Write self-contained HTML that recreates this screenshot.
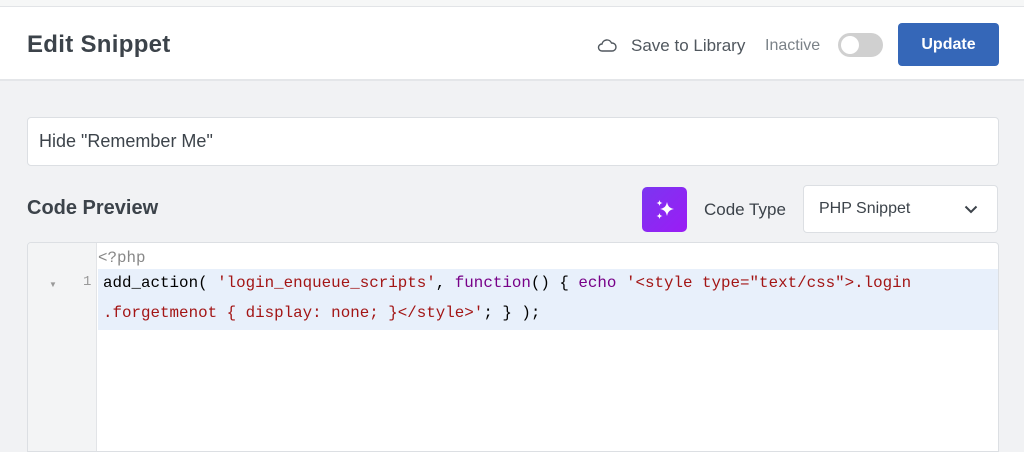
<!DOCTYPE html>
<html><head><meta charset="utf-8"><style>
*{box-sizing:border-box;margin:0;padding:0}
body{width:1024px;height:446px;overflow:hidden;background:#f1f2f4;font-family:"Liberation Sans",sans-serif;position:relative}
.abs{position:absolute}
.top{left:0;top:0;width:1024px;height:7px;background:#f6f7f7;border-bottom:1px solid #e2e4e7}
.hdr{left:0;top:7px;width:1024px;height:74px;background:#fff;border-bottom:2px solid #e4e6e9}
.title{left:27px;top:31px;font-size:24px;color:#3c434a;font-weight:bold;letter-spacing:0.3px}
.save{left:631px;top:36px;font-size:17px;color:#50575e}
.inact{left:765px;top:37px;font-size:16px;color:#7b8288}
.tog{left:838px;top:33px;width:45px;height:24px;border-radius:12px;background:#d0d0d0}
.tog:after{content:"";position:absolute;left:3px;top:3px;width:18px;height:18px;border-radius:50%;background:#fff}
.upd{left:898px;top:23px;width:101px;height:43px;background:#3567b8;border-radius:4px;color:#fff;font-weight:bold;font-size:16px;text-align:center;line-height:43px}
.name{left:27px;top:117px;width:972px;height:49px;background:#fff;border:1px solid #dcdfe3;border-radius:4px;font-size:18px;color:#3c434a;padding-left:11px;line-height:47px}
.cp{left:27px;top:197px;font-size:20px;color:#3c434a;font-weight:bold}
.ai{left:642px;top:187px;width:45px;height:45px;border-radius:5px;background:linear-gradient(135deg,#7b36f0,#9b1cf5)}
.ct{left:704px;top:200px;font-size:17px;color:#3c434a}
.sel{left:803px;top:185px;width:195px;height:48px;background:#fff;border:1px solid #dcdfe3;border-radius:4px;font-size:16px;color:#3c434a;padding-left:15px;line-height:46px}
.ed{left:27px;top:242px;width:972px;height:210px;background:#fff;border:1px solid #dcdfe3;border-radius:4px 4px 0 0;overflow:hidden}
.gut{left:0;top:0;width:69px;height:210px;background:#f3f4f5;border-right:1px solid #e2e4e7}
.hl{left:70px;top:26px;width:902px;height:61px;background:#e8f0fb}
.code{font-family:"Liberation Mono",monospace;font-size:15.85px;white-space:pre;color:#000}
.s{color:#a31515}.k{color:#770088}
</style></head><body>
<div class="abs top"></div>
<div class="abs hdr"></div>
<div class="abs title">Edit Snippet</div>
<svg class="abs" style="left:597px;top:38px" width="20" height="14" viewBox="0 0 20 14"><path d="M5 13h10a4 4 0 0 0 0-8h-.5A5 5 0 0 0 5 6a3.5 3.5 0 0 0 0 7z" fill="none" stroke="#50575e" stroke-width="1.4"/></svg>
<div class="abs save">Save to Library</div>
<div class="abs inact">Inactive</div>
<div class="abs tog"></div>
<div class="abs upd">Update</div>
<div class="abs name">Hide "Remember Me"</div>
<div class="abs cp">Code Preview</div>
<div class="abs ai"><svg width="45" height="45" viewBox="0 0 45 45"><path d="M25 15c1 4.5 2.5 6 7 7-4.5 1-6 2.5-7 7-1-4.5-2.5-6-7-7 4.5-1 6-2.5 7-7zM17.5 13c.5 2 1 2.5 3 3-2 .5-2.5 1-3 3-.5-2-1-2.5-3-3 2-.5 2.5-1 3-3zM17.5 26c.5 2 1 2.5 3 3-2 .5-2.5 1-3 3-.5-2-1-2.5-3-3 2-.5 2.5-1 3-3z" fill="#fff"/></svg></div>
<div class="abs ct">Code Type</div>
<div class="abs sel">PHP Snippet<svg class="abs" style="left:160px;top:19px" width="14" height="9" viewBox="0 0 14 9"><path d="M1.5 1.5l5.5 5.5 5.5-5.5" fill="none" stroke="#3c434a" stroke-width="2"/></svg></div>
<div class="abs ed">
<div class="abs gut"></div>
<div class="abs hl"></div>
<div class="abs code" style="left:70px;top:6px;color:#888">&lt;?php</div>
<div class="abs" style="left:21px;top:37px;font-size:8px;color:#999">▼</div>
<div class="abs code" style="left:55px;top:31px;color:#999;font-size:14px">1</div>
<div class="abs code" style="left:75px;top:31px">add_action( <span class="s">'login_enqueue_scripts'</span>, <span class="k">function</span>() { <span class="k">echo</span> <span class="s">'&lt;style type="text/css"&gt;.login</span></div>
<div class="abs code" style="left:75px;top:61px"><span class="s">.forgetmenot { display: none; }&lt;/style&gt;'</span>; } );</div>
</div>
</body></html>
